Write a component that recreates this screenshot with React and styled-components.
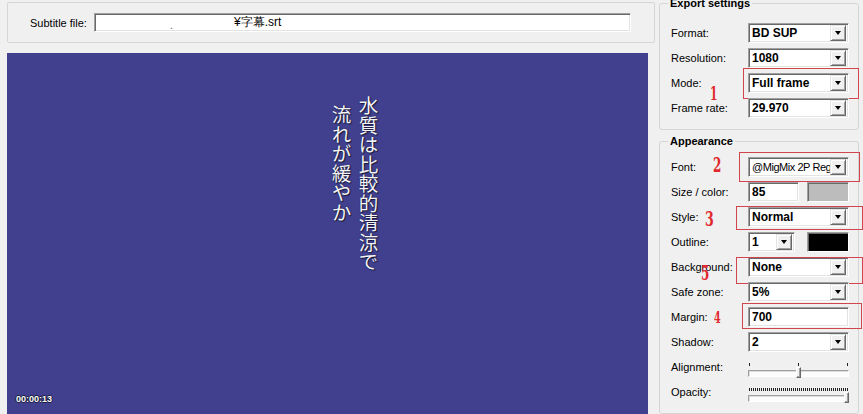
import React from 'react';
import styled, { createGlobalStyle } from 'styled-components';

const GlobalStyle = createGlobalStyle`
	html, body {
		margin: 0;
		padding: 0;
		background: #f0f0f0;
		overflow: hidden;
	}
	body {
		font-family: "Liberation Sans", Arial, sans-serif;
		font-size: 11px;
		color: #000;
	}
`;

const Window = styled.div`
	display: flex;
	width: 863px;
	height: 414px;
	overflow: hidden;
	background: #f0f0f0;
`;

const LeftPane = styled.div`
	width: 655px;
	padding-left: 7px;
	box-sizing: border-box;
	display: flex;
	flex-direction: column;
`;

const FileGroup = styled.div`
	margin-top: 2px;
	width: 648px;
	height: 41px;
	box-sizing: border-box;
	border: 1px solid #d5d5d5;
	border-radius: 2px;
	display: flex;
	align-items: center;
	padding: 0 23px 0 22px;
`;

const FileLabel = styled.span`
	width: 64px;
	font-size: 11px;
`;

const sunken = `
	box-sizing: border-box;
	border: 1px solid;
	border-color: #a0a0a0 #ffffff #ffffff #a0a0a0;
	box-shadow: inset 1px 1px 0 #696969, inset -1px -1px 0 #e3e3e3;
`;

const FileField = styled.div`
	${sunken}
	width: 537px;
	height: 19px;
	background: #fff;
	display: flex;
	align-items: center;
	font-size: 12px;
	white-space: nowrap;
`;

const FieldDot = styled.span`
	margin-left: 75px;
	width: 64px;
	font-size: 10px;
	color: #555;
	align-self: flex-end;
`;

const Preview = styled.div`
	margin-top: 10px;
	width: 641px;
	flex: 1;
	background: #40408f;
	position: relative;
	overflow: hidden;
`;

const SubtitleBlock = styled.div`
	position: absolute;
	left: 321px;
	top: 43px;
	display: flex;
	flex-direction: row-reverse;
`;

const SubLine = styled.div`
	writing-mode: vertical-rl;
	font-family: "Noto Sans CJK JP", "Noto Sans CJK SC", sans-serif;
	font-size: 19.5px;
	line-height: 27px;
	color: #f4f4f8;
	margin-top: ${p => p.$offset || 0}px;
	text-shadow: 0 0 1px #10102a, 1px 1px 1px rgba(0, 0, 0, 0.6);
`;

const TimeCode = styled.div`
	position: absolute;
	left: 9px;
	bottom: 10px;
	font-size: 9px;
	font-weight: bold;
	color: #fff;
	text-shadow: -1px 0 #1a1a3a, 1px 0 #1a1a3a, 0 -1px #1a1a3a, 0 1px #1a1a3a;
`;

const RightPane = styled.div`
	flex: 1;
	padding: 0 5px 0 4px;
	display: flex;
	flex-direction: column;
`;

const Group = styled.fieldset`
	margin: ${p => p.$mt}px 0 0 0;
	padding: ${p => p.$pt}px 9px ${p => p.$pb}px 11px;
	border: 1px solid #d5d5d5;
	border-radius: 3px;
	min-inline-size: 0;
	${p => p.$grow && 'flex: 1;'}
`;

const Legend = styled.legend`
	font-size: 11px;
	line-height: 13px;
	font-weight: bold;
	padding: 0 2px;
	margin-left: -3px;
`;

const Row = styled.div`
	display: grid;
	grid-template-columns: 77px 1fr;
	align-items: center;
	height: 25px;
	position: relative;
`;

const Label = styled.span`
	font-size: 11px;
	white-space: nowrap;
`;

const Controls = styled.div`
	display: flex;
	align-items: center;
	gap: ${p => p.$gap || 0}px;
	position: relative;
`;

const ComboBox = styled.div`
	${sunken}
	width: ${p => p.$w || 101}px;
	height: 20px;
	background: #fff;
	display: flex;
	align-items: center;
	padding: 0 2px 0 2px;
`;

const ComboValue = styled.span`
	flex: 1;
	overflow: hidden;
	white-space: nowrap;
	font-size: ${p => (p.$bold ? 12 : 11)}px;
	font-weight: ${p => (p.$bold ? 'bold' : 'normal')};
	letter-spacing: ${p => (p.$bold ? 0 : -0.45)}px;
	padding-left: 1px;
`;

const DropButton = styled.div`
	width: 16px;
	height: 16px;
	box-sizing: border-box;
	background: #f0f0f0;
	border: 1px solid;
	border-color: #e3e3e3 #696969 #696969 #e3e3e3;
	box-shadow: inset 1px 1px 0 #fff, inset -1px -1px 0 #a0a0a0;
	display: flex;
	align-items: center;
	justify-content: center;
	flex-shrink: 0;
`;

const Arrow = styled.span`
	width: 0;
	height: 0;
	border-left: 3.5px solid transparent;
	border-right: 3.5px solid transparent;
	border-top: 4px solid #000;
	margin-top: 1px;
`;

const TextBox = styled.div`
	${sunken}
	width: ${p => p.$w || 101}px;
	height: 20px;
	background: #fff;
	display: flex;
	align-items: center;
	padding-left: 3px;
	font-size: 12px;
	font-weight: bold;
`;

const Swatch = styled.div`
	${sunken}
	width: 42px;
	height: 20px;
	background: ${p => p.$color};
	box-shadow: inset 1px 1px 0 #696969;
`;

const SliderBox = styled.div`
	width: 101px;
	height: 25px;
	box-sizing: border-box;
	display: flex;
	flex-direction: column;
	justify-content: flex-end;
	padding-bottom: 2px;
	position: relative;
`;

const TickRow = styled.div`
	height: 3px;
	margin: 0 1px 4px 1px;
	display: flex;
	justify-content: space-between;
	${p =>
		p.$dense &&
		'background: repeating-linear-gradient(to right, #222 0 1px, transparent 1px 2px);'}
`;

const Tick = styled.span`
	width: 1px;
	height: 3px;
	background: #222;
`;

const Track = styled.div`
	height: 7px;
	box-sizing: border-box;
	border: 1px solid;
	border-color: #a0a0a0 #ffffff #ffffff #a0a0a0;
	box-shadow: inset 1px 1px 0 #dcdcdc;
	background: #fcfcfc;
`;

const Thumb = styled.div`
	position: absolute;
	bottom: 1px;
	width: 5px;
	height: 11px;
	box-sizing: border-box;
	background: #f0f0f0;
	border: 1px solid;
	border-color: #ffffff #696969 #696969 #ffffff;
	box-shadow: inset -1px -1px 0 #a0a0a0;
`;

const RedFrame = styled.div`
	position: absolute;
	left: ${p => p.$l}px;
	top: ${p => p.$t}px;
	width: ${p => p.$w}px;
	height: ${p => p.$h}px;
	box-sizing: border-box;
	border: 1px solid #d2454c;
	pointer-events: none;
`;

const Mark = styled.span`
	position: absolute;
	left: ${p => p.$l}px;
	top: ${p => p.$t}px;
	font-family: "DejaVu Serif", "Liberation Serif", serif;
	font-weight: bold;
	font-size: ${p => p.$size}px;
	line-height: 1;
	color: #e0282e;
	transform: scaleX(0.6);
	transform-origin: left top;
`;

const Combo = ({ value, width, regular }) => (
	<ComboBox $w={width}>
		<ComboValue $bold={!regular}>{value}</ComboValue>
		<DropButton>
			<Arrow />
		</DropButton>
	</ComboBox>
);

const Slider = ({ value, dense }) => (
	<SliderBox>
		<TickRow $dense={dense}>
			{!dense && (
				<>
					<Tick />
					<Tick />
					<Tick />
				</>
			)}
		</TickRow>
		<Track />
		<Thumb style={{ left: Math.round(value * 96) + 'px' }} />
	</SliderBox>
);

export default function App() {
	return (
		<Window>
			<GlobalStyle />
			<LeftPane>
				<FileGroup>
					<FileLabel>Subtitle file:</FileLabel>
					<FileField>
						<FieldDot>.</FieldDot>
						<span>¥字幕.srt</span>
					</FileField>
				</FileGroup>
				<Preview>
					<SubtitleBlock>
						<SubLine>水質は比較的清涼で</SubLine>
						<SubLine $offset={9}>流れが緩やか</SubLine>
					</SubtitleBlock>
					<TimeCode>00:00:13</TimeCode>
				</Preview>
			</LeftPane>
			<RightPane>
				<Group $mt={-3} $pt={10} $pb={9}>
					<Legend>Export settings</Legend>
					<Row>
						<Label>Format:</Label>
						<Controls>
							<Combo value="BD SUP" />
						</Controls>
					</Row>
					<Row>
						<Label>Resolution:</Label>
						<Controls>
							<Combo value="1080" />
						</Controls>
					</Row>
					<Row>
						<Label>Mode:</Label>
						<Mark $l={39} $t={15} $size={18}>1</Mark>
						<Controls>
							<Combo value="Full frame" />
							<RedFrame $l={-5} $t={-5} $w={116} $h={31} />
						</Controls>
					</Row>
					<Row>
						<Label>Frame rate:</Label>
						<Controls>
							<Combo value="29.970" />
						</Controls>
					</Row>
				</Group>
				<Group $mt={5} $pt={6} $pb={7} $grow>
					<Legend>Appearance</Legend>
					<Row>
						<Label>Font:</Label>
						<Mark $l={42} $t={1} $size={20}>2</Mark>
						<Controls>
							<Combo value="@MigMix 2P Regular" regular />
							<RedFrame $l={-9} $t={-5} $w={121} $h={30} />
						</Controls>
					</Row>
					<Row>
						<Label>Size / color:</Label>
						<Controls $gap={8}>
							<TextBox $w={51}>85</TextBox>
							<Swatch $color="#bcbcbc" />
						</Controls>
					</Row>
					<Row>
						<Label>Style:</Label>
						<Mark $l={34} $t={4} $size={21}>3</Mark>
						<Controls>
							<Combo value="Normal" />
							<RedFrame $l={-12} $t={-1} $w={127} $h={24} />
						</Controls>
					</Row>
					<Row>
						<Label>Outline:</Label>
						<Controls $gap={12}>
							<Combo value="1" width={47} />
							<Swatch $color="#000" />
						</Controls>
					</Row>
					<Row>
						<Label>Background:</Label>
						<Mark $l={30} $t={9} $size={20}>5</Mark>
						<Controls>
							<Combo value="None" />
							<RedFrame $l={-12} $t={0} $w={127} $h={27} />
						</Controls>
					</Row>
					<Row>
						<Label>Safe zone:</Label>
						<Controls>
							<Combo value="5%" />
						</Controls>
					</Row>
					<Row>
						<Label>Margin:</Label>
						<Mark $l={43} $t={6} $size={16}>4</Mark>
						<Controls>
							<TextBox>700</TextBox>
							<RedFrame $l={-6} $t={-4} $w={120} $h={26} />
						</Controls>
					</Row>
					<Row>
						<Label>Shadow:</Label>
						<Controls>
							<Combo value="2" />
						</Controls>
					</Row>
					<Row>
						<Label>Alignment:</Label>
						<Slider value={0.5} />
					</Row>
					<Row>
						<Label>Opacity:</Label>
						<Slider value={1} dense />
					</Row>
				</Group>
			</RightPane>
		</Window>
	);
}
